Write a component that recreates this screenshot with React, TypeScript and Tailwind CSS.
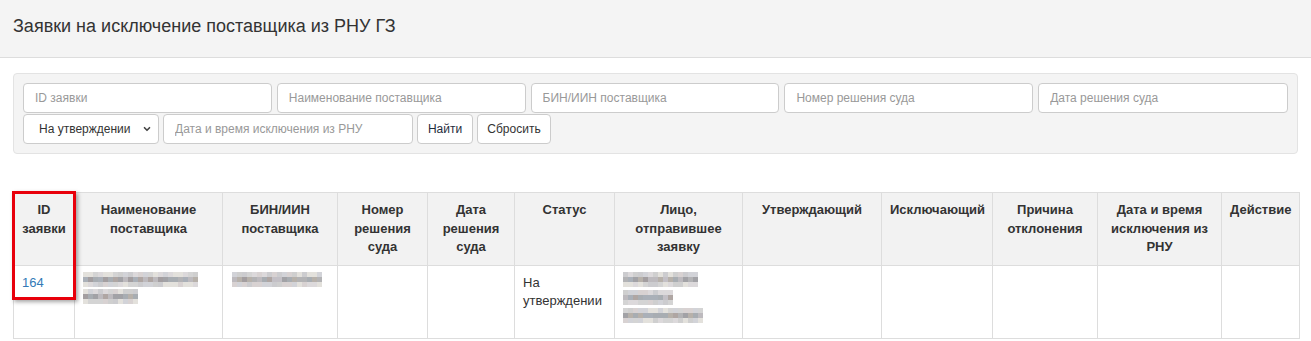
import { ChevronDown } from 'lucide-react';

const FONT = "font-['Liberation_Sans',Arial,sans-serif]";

const COLS = [
  { w: 'w-[61px]', label: 'ID заявки' },
  { w: 'w-[148px]', label: 'Наименование поставщика' },
  { w: 'w-[115px]', label: 'БИН/ИИН поставщика' },
  { w: 'w-[90px]', label: 'Номер решения суда' },
  { w: 'w-[87px]', label: 'Дата решения суда' },
  { w: 'w-[100px]', label: 'Статус' },
  { w: 'w-[128px]', label: 'Лицо, отправившее заявку' },
  { w: 'w-[139px]', label: 'Утверждающий' },
  { w: 'w-[111px]', label: 'Исключающий' },
  { w: 'w-[105px]', label: 'Причина отклонения' },
  { w: 'w-[124px]', label: 'Дата и время исключения из РНУ' },
  { w: 'w-[78px]', label: 'Действие' },
];

const MID = ['#b3b3b5', '#a39ea0', '#bdbabe', '#a8adb2', '#afa6a3', '#c3c0c6', '#a2a2a6', '#b7b1aa', '#aab0b8'];
const EDGE = ['#d4d4d4', '#dcd9db', '#cccccf', '#e3e1dc', '#d2d3d8', '#d8d2d2', '#cfcfcf'];

// mosaic stand-in for the masked personal data
function Mosaic({ cols, seed }: { cols: number; seed: number }) {
  let s = seed;
  const next = () => {
    s = (s * 9301 + 49297) % 233280;
    return s / 233280;
  };
  const rows = [EDGE, MID, EDGE];
  return (
    <div className="flex flex-col">
      {rows.map((pal, r) => (
        <div key={r} className="flex">
          {Array.from({ length: cols }).map((_, c) => (
            <div key={c} className="h-[5px] w-[5px] shrink-0" style={{ background: pal[Math.floor(next() * pal.length)] }} />
          ))}
        </div>
      ))}
    </div>
  );
}

function Field({ placeholder, w = 'w-[249px]' }: { placeholder: string; w?: string }) {
  return (
    <input
      placeholder={placeholder}
      className={`${w} h-[30px] rounded-[4px] border border-[#cccccc] bg-white px-[11px] text-[12px] text-[#555] outline-none placeholder:text-[#999]`}
    />
  );
}

export default function App() {
  return (
    <div className={`${FONT} min-h-[341px] bg-white text-[#333]`}>
      <div className="h-[58px] border-b border-[#dddddd] bg-[#f4f4f4] px-[13px] pt-[15px]">
        <h1 className="text-[18px] leading-[22px] text-[#333]">Заявки на исключение поставщика из РНУ ГЗ</h1>
      </div>

      <div className="mx-[13px] mt-[15px] h-[81px] rounded-[4px] border border-[#e3e3e3] bg-[#f4f4f4] px-[9px] pt-[9px]">
        <div className="flex gap-[5px]">
          <Field placeholder="ID заявки" />
          <Field placeholder="Наименование поставщика" />
          <Field placeholder="БИН/ИИН поставщика" />
          <Field placeholder="Номер решения суда" />
          <Field placeholder="Дата решения суда" w="w-[250px]" />
        </div>
        <div className="mt-[1px] flex gap-[4px]">
          <div className="relative">
            <select className="h-[30px] w-[136px] appearance-none rounded-[4px] border border-[#cccccc] bg-white pl-[15px] text-[12px] text-[#333] outline-none">
              <option>На утверждении</option>
            </select>
            <ChevronDown className="pointer-events-none absolute right-[7px] top-[10px] h-[10px] w-[10px] text-[#444]" strokeWidth={4} />
          </div>
          <Field placeholder="Дата и время исключения из РНУ" w="w-[250px]" />
          <button className="h-[30px] w-[56px] rounded-[4px] border border-[#cccccc] bg-white text-[12px] text-[#1f2d3d]">Найти</button>
          <button className="h-[30px] w-[74px] rounded-[4px] border border-[#cccccc] bg-white text-[12px] text-[#333]">Сбросить</button>
        </div>
      </div>

      <div className="relative mx-[13px] mt-[38px]">
        <table className="w-[1286px] table-fixed border-collapse text-[13px] leading-[18.5px]">
          <thead>
            <tr className="bg-[#f2f2f2]">
              {COLS.map((c) => (
                <th key={c.label} className={`${c.w} border border-[#dddddd] p-[8px] text-center align-top font-bold`}>
                  {c.label}
                </th>
              ))}
            </tr>
          </thead>
          <tbody>
            <tr className="h-[73px]">
              <td className="border border-[#dddddd] p-[8px] align-top">
                <a className="text-[#337ab7]" href="#">164</a>
              </td>
              <td className="border border-[#dddddd] px-[8px] pt-[6px] align-top">
                <Mosaic cols={23} seed={7} />
                <div className="mt-[2px]"><Mosaic cols={11} seed={31} /></div>
              </td>
              <td className="border border-[#dddddd] px-[8px] pt-[6px] align-top">
                <div className="pl-[1px]"><Mosaic cols={18} seed={11} /></div>
              </td>
              <td className="border border-[#dddddd]" />
              <td className="border border-[#dddddd]" />
              <td className="border border-[#dddddd] p-[8px] align-top">На утверждении</td>
              <td className="border border-[#dddddd] px-[8px] pt-[6px] align-top">
                <Mosaic cols={15} seed={3} />
                <div className="mt-[3px]"><Mosaic cols={10} seed={19} /></div>
                <div className="mt-[3px]"><Mosaic cols={16} seed={23} /></div>
              </td>
              <td className="border border-[#dddddd]" />
              <td className="border border-[#dddddd]" />
              <td className="border border-[#dddddd]" />
              <td className="border border-[#dddddd]" />
              <td className="border border-[#dddddd]" />
            </tr>
          </tbody>
        </table>
        <div className="pointer-events-none absolute left-[-1px] top-[-1px] h-[109px] w-[64px] border-[3px] border-[#e8000b] shadow-[2px_2px_4px_rgba(0,0,0,0.35)]" />
      </div>
    </div>
  );
}
